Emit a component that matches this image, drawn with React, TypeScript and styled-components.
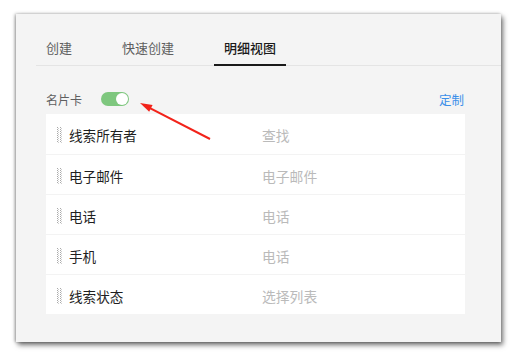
import React from "react";
import styled, { createGlobalStyle } from "styled-components";

const Global = createGlobalStyle`
  html, body { margin: 0; padding: 0; background: #ffffff; }
  body { font-family: "Noto Sans CJK SC", "Noto Sans", sans-serif; }
`;

const Page = styled.div`
  width: 517px;
  height: 356px;
  padding: 14px 0 0 16px;
  box-sizing: border-box;
`;

const Panel = styled.div`
  position: relative;
  width: 485px;
  height: 328px;
  background: #f4f4f4;
  box-shadow: 2px 3px 5px rgba(0, 0, 0, 0.55), -1px 0 3px rgba(0, 0, 0, 0.35);
  padding-left: 20px;
  box-sizing: border-box;
  display: flex;
  flex-direction: column;
`;

const TabBar = styled.div`
  display: flex;
  gap: 30px;
  padding-top: 24px;
  border-bottom: 1px solid #e4e4e4;
`;

const Tab = styled.div<{ $active?: boolean }>`
  padding: 0 10px 6px;
  font-size: 13px;
  line-height: 20px;
  color: ${(p) => (p.$active ? "#1a1a1a" : "#5f5f5f")};
  font-weight: ${(p) => (p.$active ? 500 : 400)};
  border-bottom: 2px solid ${(p) => (p.$active ? "#1a1a1a" : "transparent")};
  margin-bottom: -1px;
  white-space: nowrap;
`;

const Content = styled.div`
  padding: 18px 36px 0 10px;
  display: flex;
  flex-direction: column;
`;

const Toolbar = styled.div`
  height: 30px;
  display: flex;
  align-items: center;
`;

const ToolLabel = styled.span`
  font-size: 12px;
  color: #5f5f5f;
  width: 55px;
`;

const Toggle = styled.span`
  position: relative;
  width: 28px;
  height: 14px;
  border-radius: 7px;
  background: #7ec77e;
  display: inline-block;
`;

const Knob = styled.span`
  position: absolute;
  right: 1px;
  top: 1px;
  width: 12px;
  height: 12px;
  border-radius: 50%;
  background: #ffffff;
`;

const Link = styled.span`
  margin-left: auto;
  font-size: 12.5px;
  color: #3b8fe9;
  padding-right: 1px;
`;

const Card = styled.div`
  background: #ffffff;
  display: flex;
  flex-direction: column;
`;

const Row = styled.div<{ $first?: boolean }>`
  height: 40px;
  box-sizing: border-box;
  border-top: ${(p) => (p.$first ? "none" : "1px solid #f3f3f3")};
  display: grid;
  grid-template-columns: 5px 186px 1fr;
  column-gap: 7px;
  align-items: center;
  padding-left: 11px;
`;

const Label = styled.span`
  font-size: 13.6px;
  color: #1f1f1f;
  padding-top: 2px;
`;

const Value = styled.span`
  font-size: 13.8px;
  color: #bababa;
  padding-top: 2px;
`;

const ArrowOverlay = styled.svg`
  position: absolute;
  left: 0;
  top: 0;
  pointer-events: none;
`;

const Handle = () => (
  <svg width="5" height="16" viewBox="0 0 5 16" style={{ marginTop: 2 }}>
    {Array.from({ length: 8 }).map((_, i) => (
      <g key={i} fill="#a9a9a9">
        <rect x="0" y={i * 2} width="1" height="1" />
        <rect x="1" y={i * 2 + 1} width="1" height="1" fill="#cfcfcf" />
        <rect x="3" y={i * 2} width="1" height="1" />
        <rect x="4" y={i * 2 + 1} width="1" height="1" fill="#cfcfcf" />
      </g>
    ))}
  </svg>
);

const rows = [
  ["线索所有者", "查找"],
  ["电子邮件", "电子邮件"],
  ["电话", "电话"],
  ["手机", "电话"],
  ["线索状态", "选择列表"],
];

export default function App() {
  return (
    <Page>
      <Global />
      <Panel>
        <TabBar>
          <Tab>创建</Tab>
          <Tab>快速创建</Tab>
          <Tab $active>明细视图</Tab>
        </TabBar>
        <Content>
          <Toolbar>
            <ToolLabel>名片卡</ToolLabel>
            <Toggle>
              <Knob />
            </Toggle>
            <Link>定制</Link>
          </Toolbar>
          <Card>
            {rows.map(([l, v], i) => (
              <Row key={i} $first={i === 0}>
                <Handle />
                <Label>{l}</Label>
                <Value>{v}</Value>
              </Row>
            ))}
          </Card>
        </Content>
        <ArrowOverlay width="485" height="328" viewBox="0 0 485 328">
          <line x1="194" y1="125" x2="133" y2="93.6" stroke="#f2231a" strokeWidth="2" />
          <polygon points="124,89 136.6,91 133.2,97.8" fill="#f2231a" />
        </ArrowOverlay>
      </Panel>
    </Page>
  );
}
